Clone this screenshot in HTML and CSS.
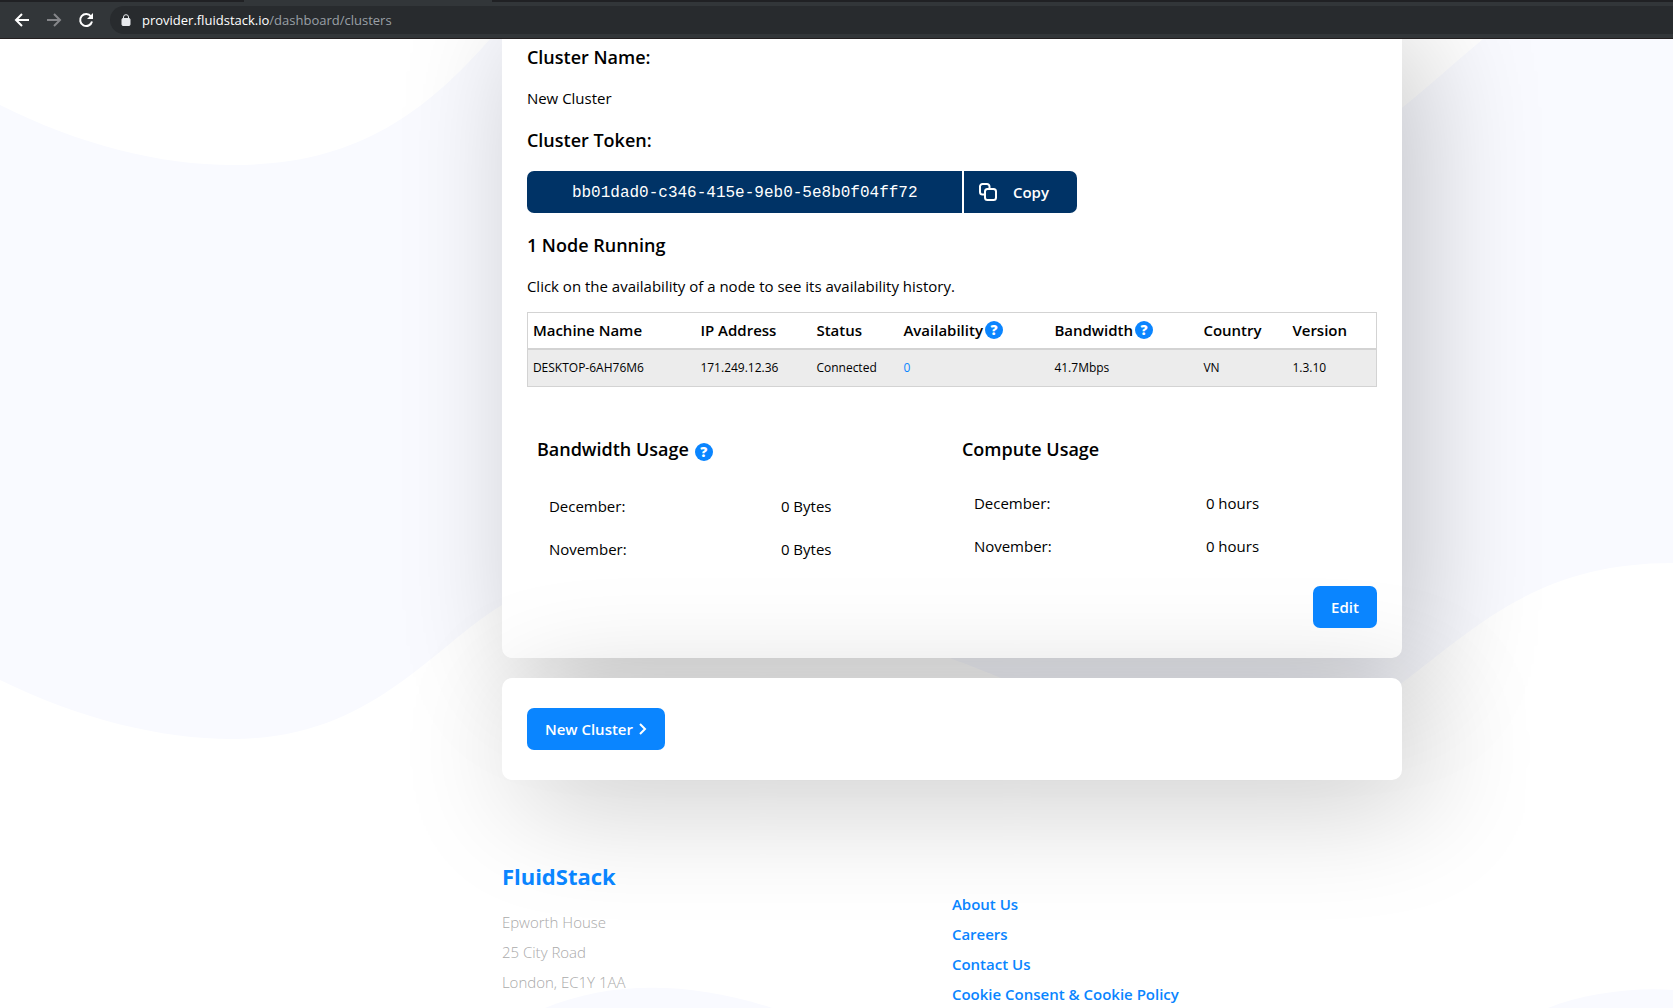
FILE: index.html
```html
<!DOCTYPE html>
<html lang="en">

<head>
    <meta charset="UTF-8">
    <meta name="viewport" content="width=device-width, initial-scale=1.0">
    <title>FluidStack Clusters</title>
    <link rel="stylesheet" href="styles.css">
</head>

<body>
    <!-- Browser bar -->
    <header class="toolbar">
        <div class="tabs"></div>
        <div class="nav">
            <button type="button" class="nav-btn" aria-label="Back">
                <svg viewBox="0 0 16 16" width="16" height="16"><path d="M15 8H2M8 2L2 8l6 6" /></svg>
            </button>
            <button type="button" class="nav-btn disabled" aria-label="Forward">
                <svg viewBox="0 0 16 16" width="16" height="16"><path d="M1 8h13M8 2l6 6-6 6" /></svg>
            </button>
            <button type="button" class="nav-btn" aria-label="Reload">
                <svg viewBox="0 0 16 16" width="16" height="16">
                    <path d="M13 4.5A6 6 0 1 0 14 9.5" />
                    <path class="solid" d="M15 1v6H9z" />
                </svg>
            </button>
            <div class="address">
                <svg viewBox="0 0 10 12" width="10" height="12">
                    <path d="M2.5 5V3a2.5 2.3 0 0 1 5 0v2" />
                    <rect x="1" y="4.5" width="8" height="7" rx="1" />
                </svg>
                <span class="url"><b>provider.fluidstack.io</b>/dashboard/clusters</span>
            </div>
        </div>
    </header>

    <main class="page">
        <!-- Background waves -->
        <svg class="waves" viewBox="0 0 1673 969" preserveAspectRatio="none" aria-hidden="true">
            <path d="M0 66C80 106 160 126 233 126C350 126 420 80 490 0H900C1000 90 1150 160 1250 160C1340 130 1400 70 1483 0H1673V524C1540 524 1480 585 1402 644C1340 690 1300 700 1240 700C1130 700 1010 640 952 620C860 560 760 376 650 376C570 460 550 540 502 566C430 610 370 700 233 700C160 700 80 680 0 641Z" />
            <path d="M545 969C610 942 690 942 772 969Z" />
            <path d="M1548 969C1585 954 1635 948 1673 951V969Z" />
        </svg>

        <div class="content">
            <section class="card">
                <h3>Cluster Name:</h3>
                <p>New Cluster</p>
                <h3>Cluster Token:</h3>
                <div class="token">
                    <code>bb01dad0-c346-415e-9eb0-5e8b0f04ff72</code>
                    <button type="button" class="copy">
                        <svg viewBox="0 0 18 18" width="18" height="18">
                            <path d="M5 11.5H3.5A2.5 2.5 0 0 1 1 9V3.5A2.5 2.5 0 0 1 3.5 1H8A2.5 2.5 0 0 1 10.5 3.5V5.5" />
                            <rect x="6" y="6" width="11" height="11" rx="2.5" />
                        </svg>
                        Copy
                    </button>
                </div>
                <h3>1 Node Running</h3>
                <p>Click on the availability of a node to see its availability history.</p>

                <table class="nodes">
                    <thead>
                        <tr>
                            <th class="col-name">Machine Name</th>
                            <th class="col-ip">IP Address</th>
                            <th class="col-status">Status</th>
                            <th class="col-avail"><span class="with-help">Availability<button type="button" class="help" aria-label="About availability">?</button></span></th>
                            <th class="col-band"><span class="with-help">Bandwidth<button type="button" class="help" aria-label="About bandwidth">?</button></span></th>
                            <th class="col-country">Country</th>
                            <th>Version</th>
                        </tr>
                    </thead>
                    <tbody>
                        <tr>
                            <td>DESKTOP-6AH76M6</td>
                            <td>171.249.12.36</td>
                            <td>Connected</td>
                            <td><a href="#">0</a></td>
                            <td>41.7Mbps</td>
                            <td>VN</td>
                            <td>1.3.10</td>
                        </tr>
                    </tbody>
                </table>

                <div class="usage">
                    <div class="usage-col">
                        <h3 class="with-help">Bandwidth Usage <button type="button" class="help" aria-label="About bandwidth usage">?</button></h3>
                        <dl>
                            <dt>December:</dt>
                            <dd>0 Bytes</dd>
                            <dt>November:</dt>
                            <dd>0 Bytes</dd>
                        </dl>
                    </div>
                    <div class="usage-col">
                        <h3>Compute Usage</h3>
                        <dl>
                            <dt>December:</dt>
                            <dd>0 hours</dd>
                            <dt>November:</dt>
                            <dd>0 hours</dd>
                        </dl>
                    </div>
                </div>

                <div class="actions">
                    <button type="button" class="btn">Edit</button>
                </div>
            </section>

            <section class="card new-card">
                <button type="button" class="btn">New Cluster
                    <svg viewBox="0 0 8 12" width="8" height="12"><path d="M1 1l5 5-5 5" /></svg>
                </button>
            </section>

            <footer class="footer">
                <div>
                    <h2>FluidStack</h2>
                    <address>Epworth House<br>25 City Road<br>London, EC1Y 1AA</address>
                </div>
                <nav class="links">
                    <a href="#">About Us</a>
                    <a href="#">Careers</a>
                    <a href="#">Contact Us</a>
                    <a href="#">Cookie Consent &amp; Cookie Policy</a>
                </nav>
            </footer>
        </div>
    </main>
</body>

</html>
```

FILE: styles.css
```css
* {
    box-sizing: border-box;
}

body {
    display: flex;
    flex-direction: column;
    height: 100vh;
    margin: 0;
    overflow: hidden;
    background-color: #ffffff;
    color: #000000;
    font-family: "Segoe UI", "Open Sans", sans-serif;
    font-size: 15px;
    line-height: 24px;
}

button {
    border: none;
    padding: 0;
    font-family: inherit;
    cursor: pointer;
}

h2, h3, p, dl, dd {
    margin: 0;
}

a {
    color: #0a85ff;
    text-decoration: none;
}

svg {
    fill: none;
    stroke: currentColor;
    stroke-width: 2;
    flex-shrink: 0;
}

/* browser bar */
.toolbar {
    flex-shrink: 0;
    background-color: #323639;
    border-bottom: 1px solid #231f20;
}

.tabs {
    height: 2px;
    background: linear-gradient(to right, #202124 244px, #323639 244px, #323639 492px, #202124 492px);
}

.nav {
    display: flex;
    align-items: center;
    gap: 16px;
    padding: 4px 0 4px 14px;
}

.nav-btn {
    display: flex;
    background: none;
    color: #ffffff;
}

.nav-btn.disabled {
    color: #85868a;
}

.nav-btn .solid {
    fill: currentColor;
    stroke: none;
}

.address {
    display: flex;
    align-items: center;
    flex: 1;
    gap: 11px;
    height: 28px;
    padding-left: 11px;
    border-radius: 14px 0 0 14px;
    background-color: #282b2e;
    color: #e8eaed;
}

.address svg {
    stroke-width: 1;
}

.address rect {
    fill: currentColor;
}

.url {
    font-size: 13px;
    color: #9aa0a6;
}

.url b {
    font-weight: normal;
    color: #ffffff;
}

/* page */
.page {
    position: relative;
    flex: 1;
    overflow: hidden;
}

.waves {
    position: absolute;
    top: 0;
    left: 0;
    width: 100%;
    height: 100%;
    fill: #f9faff;
    stroke: none;
}

.content {
    position: relative;
    max-width: 900px;
    margin-top: -20px;
    margin-left: 30%;
}

.card {
    padding: 26px 25px 30px;
    border-radius: 10px;
    background-color: #ffffff;
    box-shadow: 20px 20px 120px rgba(0, 0, 0, 0.22);
}

.new-card {
    margin-top: 20px;
    padding: 30px 25px;
}

h3 {
    font-size: 18px;
    font-weight: 600;
}

.card p {
    margin: 17px 0 14px;
}

.card p + h3 {
    margin-top: 18px;
}

.token {
    display: flex;
    gap: 2px;
    width: 550px;
    height: 42px;
    margin: 19px 0 20px;
    border-radius: 7px;
    overflow: hidden;
}

.token code {
    flex: 1;
    padding-left: 45px;
    background-color: #003366;
    color: #ffffff;
    font-family: "Liberation Mono", monospace;
    font-size: 16px;
    line-height: 44px;
}

.copy {
    display: flex;
    align-items: center;
    gap: 16px;
    width: 113px;
    padding-left: 15px;
    background-color: #003366;
    color: #ffffff;
    font-size: 15px;
    font-weight: 600;
}

/* node table */
.nodes {
    width: 100%;
    table-layout: fixed;
    border-collapse: collapse;
    border: 1px solid #d3d3d3;
    text-align: left;
}

.nodes th,
.nodes td {
    height: 36px;
    padding: 0 5px;
    font-size: 12px;
    white-space: nowrap;
}

.nodes th {
    border-bottom: 2px solid #d3d3d3;
    font-size: 15px;
    font-weight: 600;
}

.nodes td {
    height: 38px;
}

.nodes tbody tr {
    background-color: #ececec;
}

.col-name { width: 168px; }
.col-ip { width: 116px; }
.col-status { width: 87px; }
.col-avail { width: 151px; }
.col-band { width: 149px; }
.col-country { width: 89px; }

.with-help {
    display: flex;
    align-items: center;
    gap: 2px;
}

.help {
    width: 18px;
    height: 18px;
    border-radius: 50%;
    background-color: #0a85ff;
    color: #ffffff;
    font-size: 14px;
    font-weight: 800;
    line-height: 18px;
}

.usage {
    display: grid;
    grid-template-columns: 1fr 1fr;
    margin-top: 40px;
}

.usage-col {
    padding: 10px;
}

.usage-col h3.with-help {
    align-items: flex-start;
    gap: 6px;
    height: 27px;
}

.usage-col .help {
    margin-top: 6px;
}

.usage dl {
    display: grid;
    grid-template-columns: 232px 1fr;
    row-gap: 19px;
    padding: 30px 12px 0;
}

.actions {
    display: flex;
    justify-content: flex-end;
    margin-top: 15px;
}

.btn {
    display: inline-flex;
    align-items: center;
    gap: 6px;
    height: 42px;
    padding: 0 18px;
    border-radius: 7px;
    background-color: #0a85ff;
    color: #ffffff;
    font-size: 15px;
    font-weight: 600;
}

/* footer */
.footer {
    display: grid;
    grid-template-columns: 1fr 1fr;
    margin-top: 80px;
    line-height: 30px;
}

.footer h2 {
    margin-bottom: 15px;
    color: #0a85ff;
    font-size: 22px;
    font-weight: 700;
    line-height: 32px;
}

.footer address {
    color: #aaaaaa;
    font-style: normal;
    font-weight: 300;
}

.links {
    display: flex;
    flex-direction: column;
    padding-top: 29px;
    font-weight: 600;
}
```
